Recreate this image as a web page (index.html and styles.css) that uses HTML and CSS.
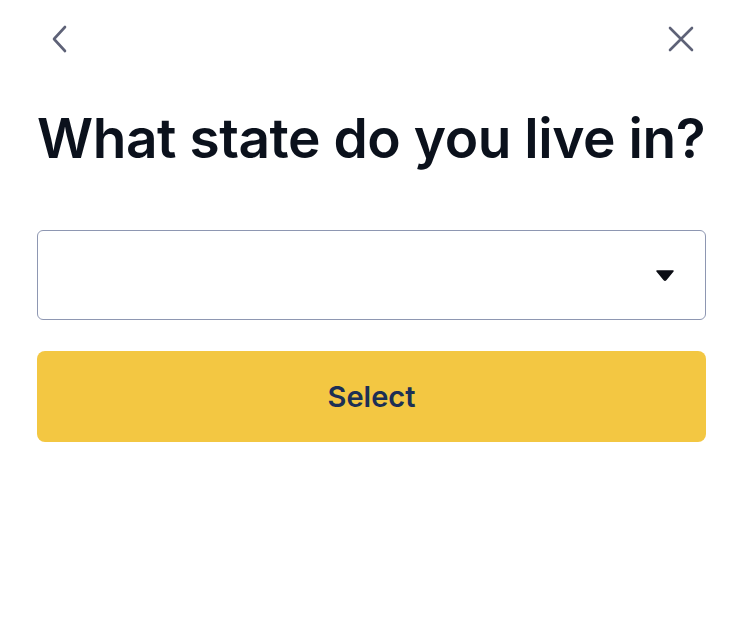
FILE: index.html
```html
<!DOCTYPE html>
<html lang="en">
<head>
<meta charset="utf-8">
<link rel="stylesheet" href="styles.css">
</head>
<body>
<div class="page">
  <div class="topbar">
    <button class="icon-btn" aria-label="Back">
      <svg width="28" height="28" viewBox="0 0 28 28"><path d="M18 2 L7 14 L18 26" fill="none" stroke="#5e6277" stroke-width="2.6" stroke-linecap="round" stroke-linejoin="round"/></svg>
    </button>
    <button class="icon-btn" aria-label="Close">
      <svg width="28" height="28" viewBox="0 0 28 28"><path d="M3 3 L25 25 M25 3 L3 25" fill="none" stroke="#5e6277" stroke-width="2.6" stroke-linecap="round"/></svg>
    </button>
  </div>
  <h1 class="title">What state do you live in?</h1>
  <div class="select-box">
    <svg class="caret" width="18" height="11" viewBox="0 0 18 11"><path d="M1 1 H17 L9.8 9.8 Q9 10.6 8.2 9.8 Z" fill="#0b0d14" stroke="#0b0d14" stroke-width="1.5" stroke-linejoin="round"/></svg>
  </div>
  <button class="primary">Select</button>
</div>
</body>
</html>
```
FILE: styles.css
```css
* { box-sizing: border-box; }
html, body { margin: 0; padding: 0; background: #fff; }
body { font-family: Inter, "Noto Sans", sans-serif; }
.page { width: 750px; height: 624px; padding: 24px 44px 0 37px; }
.topbar { display: flex; justify-content: space-between; align-items: center; height: 30px; padding: 0 11px 0 10px; }
.icon-btn { border: 0; background: none; padding: 0; width: 28px; height: 28px; display: flex; }
.title { margin: 54px 0 0 0; font-size: 55px; line-height: 60px; font-weight: 600; color: #0b111c; letter-spacing: -0.45px; white-space: nowrap; }
.select-box { margin-top: 62px; height: 90px; border: 1px solid #8e97b2; border-radius: 6px; display: flex; align-items: center; justify-content: flex-end; padding-right: 31px; }
.caret { display: block; }
.primary { margin-top: 31px; width: 100%; height: 91px; border: 0; border-radius: 8px; background: #f3c742; color: #1c2f55; font-family: Inter, "Noto Sans", sans-serif; font-size: 29px; font-weight: 600; }
```
